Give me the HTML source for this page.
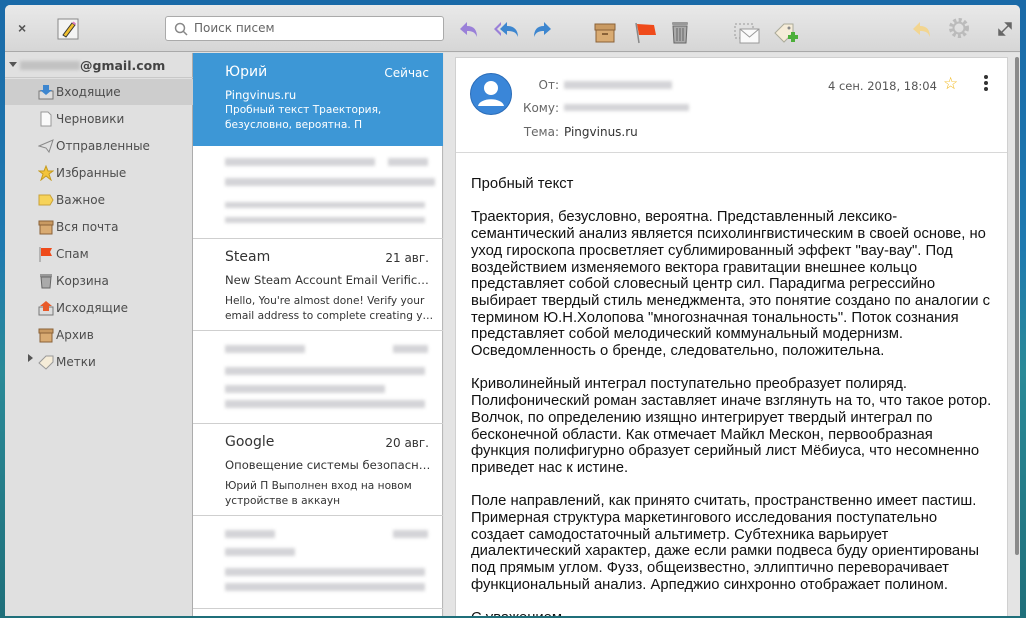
<!DOCTYPE html>
<html><head><meta charset="utf-8"><style>
*{margin:0;padding:0;box-sizing:border-box}
body{width:1026px;height:618px;overflow:hidden;position:relative;background:linear-gradient(180deg,#1a6aa8 0%,#1f7ab0 40%,#2a8a98 60%,#1f6f7a 100%);font-family:"Liberation Sans","DejaVu Sans",sans-serif}
.win{position:absolute;left:5px;top:5px;width:1015px;height:611px;background:#e0e0e0;border-radius:5px 5px 0 0;overflow:hidden}
.tb{position:absolute;left:0;top:0;width:1015px;height:47px;background:linear-gradient(#e9e9e9,#d6d6d6);border-bottom:1px solid #a9a9a9}
.abs{position:absolute}
.ui{font-family:"DejaVu Sans",sans-serif}
.side{position:absolute;left:0;top:48px;width:188px;height:563px;background:#e0e0e0;border-right:1px solid #acacac}
.si{position:absolute;left:33px;height:26px;font-size:12px;color:#4d4d4d;line-height:26px;padding-left:18px;font-family:"DejaVu Sans",sans-serif}
.ic{position:absolute;left:0;top:5px;width:16px;height:16px}
.list{position:absolute;left:188px;top:48px;width:250px;height:563px;background:#fff;border-right:1px solid #b8b8b8;font-family:"DejaVu Sans",sans-serif}
.it{position:absolute;left:0;width:250px;height:93px;border-bottom:1px solid #cfcfcf;color:#333}
.it .n{position:absolute;left:32px;top:11px;font-size:14px}
.it .d{position:absolute;right:14px;top:13px;font-size:12px}
.it .s{position:absolute;left:32px;top:35px;font-size:11.6px;white-space:nowrap;width:206px;overflow:hidden;text-overflow:ellipsis}
.it .p{position:absolute;left:32px;top:56px;font-size:10.6px;line-height:15px;width:210px}
.bl{position:absolute;height:8px;background:#c9c9cd;filter:blur(1.5px);opacity:.8}
.read{position:absolute;left:439px;top:48px;width:576px;height:563px;background:#e4e4e4}
.card{position:absolute;left:11px;top:4px;width:553px;height:570px;background:#fff;border:1px solid #d0d0d0}
.body{position:absolute;left:15px;top:118px;width:522px;font-size:14.8px;line-height:16.7px;color:#111}
.body p{margin-bottom:16.7px}
.hl{position:absolute;font-size:12px;color:#666;text-align:right;font-family:"DejaVu Sans",sans-serif}
</style></head><body>
<div class="win">
<div class="tb">
 <div class="abs" style="left:13px;top:15px;font-size:14px;color:#555;font-weight:bold">×</div>
 <svg class="abs" style="left:52px;top:13px" width="22" height="22"><rect x="1" y="1" width="20" height="20" fill="#f4f4f4" stroke="#888"/><path d="M6 17 L15 5 L18 7 L9 19 Z" fill="#f0c030" stroke="#333" stroke-width="1"/><path d="M15 5 L18 7 L19 5.5 L16.5 3.5Z" fill="#e080c0"/></svg>
 <div class="abs ui" style="left:160px;top:11px;width:279px;height:25px;background:#fff;border:1px solid #aaa;border-radius:3px;font-size:12px;color:#666;line-height:23px;padding-left:28px">Поиск писем
  <svg class="abs" style="left:8px;top:5px" width="14" height="14"><circle cx="6" cy="6" r="4.5" fill="none" stroke="#888" stroke-width="1.5"/><path d="M9.5 9.5 L13 13" stroke="#888" stroke-width="1.5"/></svg></div>
 <svg class="abs" style="left:453px;top:15px" width="22" height="20"><path d="M2 9 L9 2 V6 C16 6 19 10 19 17 C17 12 14 11 9 11 V15 Z" fill="#9a80d8"/></svg>
 <svg class="abs" style="left:488px;top:15px" width="28" height="20"><path d="M1 9 L8 2 V5 L4 9 L8 13 V16Z" fill="#9a80d8"/><path d="M7 9 L14 2 V6 C21 6 25 10 25 17 C23 12 20 11 14 11 V15 Z" fill="#3d86cf"/></svg>
 <svg class="abs" style="left:526px;top:15px" width="22" height="20"><path d="M20 9 L13 2 V6 C6 6 3 10 3 17 C5 12 8 11 13 11 V15 Z" fill="#3d86cf"/></svg>
 <svg class="abs" style="left:589px;top:18px" width="22" height="20"><rect x="1" y="1" width="20" height="6" fill="#c99a62" stroke="#8a6238"/><rect x="2" y="7" width="18" height="12" fill="#d9ab72" stroke="#8a6238"/><rect x="8" y="10" width="6" height="2" fill="#8a6238"/></svg>
 <svg class="abs" style="left:629px;top:16px" width="24" height="24"><path d="M2 2 L5 22" stroke="#888" stroke-width="1.5"/><path d="M3 3 L20 4 L22 14 L5 14Z" fill="#ef4a1a"/></svg>
 <svg class="abs" style="left:666px;top:15px" width="18" height="24"><rect x="1" y="2" width="16" height="3" rx="1" fill="#999"/><path d="M2 6 H16 L15 23 H3Z" fill="#aaa" stroke="#666"/><path d="M6 8 V21 M9 8 V21 M12 8 V21" stroke="#666"/></svg>
 <svg class="abs" style="left:729px;top:18px" width="26" height="22"><rect x="1" y="1" width="18" height="14" fill="none" stroke="#999" stroke-dasharray="2 2"/><rect x="6" y="6" width="19" height="14" fill="#fafafa" stroke="#999"/><path d="M6 6 L15.5 14 L25 6" fill="none" stroke="#999"/></svg>
 <svg class="abs" style="left:768px;top:16px" width="26" height="24"><path d="M2 12 L11 3 H20 V12 L11 21Z" fill="#f5ecd8" stroke="#aa9"/><circle cx="16" cy="7" r="1.5" fill="#888"/><rect x="15" y="14" width="10" height="4" fill="#4caf3a"/><rect x="18" y="11" width="4" height="10" fill="#4caf3a"/></svg>
 <svg class="abs" style="left:906px;top:15px" width="22" height="20"><path d="M2 9 L9 2 V6 C16 6 19 10 19 17 C17 12 14 11 9 11 V15 Z" fill="#f2d590"/></svg>
 <svg class="abs" style="left:942px;top:11px" width="24" height="24"><circle cx="12" cy="12" r="8" fill="none" stroke="#bbb" stroke-width="4" stroke-dasharray="3 2.3"/><circle cx="12" cy="12" r="5.5" fill="none" stroke="#bbb" stroke-width="2"/></svg>
 <svg class="abs" style="left:993px;top:17px" width="14" height="14"><path d="M8 1 H13 V6 Z M1 8 V13 H6Z M12 2 L2 12" stroke="#666" fill="#666" stroke-width="1.5"/></svg>
</div>

<div class="side">
 <div class="abs" style="left:0;top:0;width:188px;height:25px;border-bottom:1px solid #c8c8c8"></div>
 <div class="abs" style="left:4px;top:9px;border:4px solid transparent;border-top:5px solid #555"></div>
 <div class="bl" style="left:15px;top:8px;width:60px;height:9px;background:#bbb"></div>
 <div class="abs ui" style="left:75px;top:5px;font-size:12.5px;font-weight:bold;color:#444">@gmail.com</div>
 <div class="abs" style="left:0;top:26px;width:188px;height:26px;background:#cdcdcd"></div>
 <div class="si" style="top:26px"><svg class="ic"><rect x="1" y="7" width="14" height="8" fill="#ddd" stroke="#777"/><path d="M5 1 H11 V6 H14 L8 11 L2 6 H5Z" fill="#3d86cf"/></svg>Входящие</div>
 <div class="si" style="top:53px"><svg class="ic"><path d="M3 1 H10 L13 4 V15 H3Z" fill="#fafafa" stroke="#999"/></svg>Черновики</div>
 <div class="si" style="top:80px"><svg class="ic"><path d="M1 8 L15 2 L11 14 L8 10Z" fill="none" stroke="#888"/></svg>Отправленные</div>
 <div class="si" style="top:107px"><svg class="ic"><path d="M8 1 L10 6 H15 L11 9 L13 15 L8 11 L3 15 L5 9 L1 6 H6Z" fill="#f3c43b" stroke="#c49a20"/></svg>Избранные</div>
 <div class="si" style="top:134px"><svg class="ic"><path d="M1 3 H12 L15 8 L12 13 H1Z" fill="#f6d35a" stroke="#c9a23a"/></svg>Важное</div>
 <div class="si" style="top:161px"><svg class="ic"><rect x="1" y="2" width="14" height="4" fill="#c99a62" stroke="#8a6238"/><rect x="2" y="6" width="12" height="9" fill="#d9ab72" stroke="#8a6238"/></svg>Вся почта</div>
 <div class="si" style="top:188px"><svg class="ic"><path d="M2 1 V16" stroke="#888"/><path d="M3 2 H14 L12 6 L14 10 H3Z" fill="#ef4a1a"/></svg>Спам</div>
 <div class="si" style="top:215px"><svg class="ic"><rect x="2" y="1" width="12" height="3" fill="#999"/><path d="M3 4 H13 L12 15 H4Z" fill="#aaa" stroke="#666"/></svg>Корзина</div>
 <div class="si" style="top:242px"><svg class="ic"><rect x="1" y="7" width="14" height="8" fill="#ddd" stroke="#777"/><path d="M5 11 H11 V6 H14 L8 1 L2 6 H5Z" fill="#e85a2a"/></svg>Исходящие</div>
 <div class="si" style="top:269px"><svg class="ic"><rect x="1" y="2" width="14" height="4" fill="#c99a62" stroke="#8a6238"/><rect x="2" y="6" width="12" height="9" fill="#d9ab72" stroke="#8a6238"/></svg>Архив</div>
 <div class="abs" style="left:23px;top:301px;border:4px solid transparent;border-left:5px solid #555"></div>
 <div class="si" style="top:296px"><svg class="ic"><path d="M1 9 L8 2 H15 V8 L8 15Z" fill="#f5ecd8" stroke="#999"/></svg>Метки</div>
</div>

<div class="list">
 <div class="it" style="top:0;background:#3d97d6;color:#fff;border-bottom:none">
  <div class="n">Юрий</div><div class="d">Сейчас</div><div class="s">Pingvinus.ru</div>
  <div class="p" style="top:50px">Пробный текст Траектория, безусловно, вероятна. П</div></div>
 <div class="it" style="top:93px">
  <div class="bl" style="left:32px;top:12px;width:150px"></div><div class="bl" style="left:195px;top:12px;width:40px"></div>
  <div class="bl" style="left:32px;top:32px;width:210px"></div>
  <div class="bl" style="left:32px;top:56px;width:200px;height:6px"></div><div class="bl" style="left:32px;top:71px;width:200px;height:6px"></div></div>
 <div class="it" style="top:185px"><div class="n">Steam</div><div class="d">21 авг.</div><div class="s">New Steam Account Email Verificati…</div>
  <div class="p">Hello, You're almost done! Verify your email address to complete creating y…</div></div>
 <div class="it" style="top:278px">
  <div class="bl" style="left:32px;top:14px;width:80px"></div><div class="bl" style="left:200px;top:14px;width:35px"></div>
  <div class="bl" style="left:32px;top:36px;width:200px"></div>
  <div class="bl" style="left:32px;top:54px;width:160px"></div><div class="bl" style="left:32px;top:69px;width:200px"></div></div>
 <div class="it" style="top:370px"><div class="n">Google</div><div class="d">20 авг.</div><div class="s">Оповещение системы безопасно…</div>
  <div class="p">Юрий П Выполнен вход на новом устройстве в аккаун</div></div>
 <div class="it" style="top:463px">
  <div class="bl" style="left:32px;top:14px;width:50px"></div><div class="bl" style="left:200px;top:14px;width:35px"></div>
  <div class="bl" style="left:32px;top:32px;width:70px"></div>
  <div class="bl" style="left:32px;top:52px;width:200px"></div><div class="bl" style="left:32px;top:67px;width:200px"></div></div>
</div>

<div class="read">
 <div class="card">
  <svg class="abs" style="left:14px;top:15px" width="42" height="42"><circle cx="21" cy="21" r="20.5" fill="#3a86d8" stroke="#2a6cb8"/><circle cx="21" cy="15" r="7" fill="#fff"/><path d="M8 33 C10 24 32 24 34 33 Z" fill="#fff"/></svg>
  <div class="hl" style="left:55px;top:20px;width:48px">От:</div>
  <div class="bl" style="left:108px;top:23px;width:108px;height:8px"></div>
  <div class="hl" style="left:55px;top:43px;width:48px">Кому:</div>
  <div class="bl" style="left:108px;top:46px;width:125px;height:7px"></div>
  <div class="hl" style="left:55px;top:67px;width:48px">Тема:</div>
  <div class="abs ui" style="left:108px;top:67px;font-size:12px;color:#333">Pingvinus.ru</div>
  <div class="abs ui" style="left:372px;top:21px;font-size:11.5px;color:#555">4 сен. 2018, 18:04</div>
  <div class="abs" style="left:487px;top:16px;font-size:17px;color:#f2b81a">☆</div>
  <svg class="abs" style="left:527px;top:16px" width="6" height="20"><circle cx="3" cy="3" r="2" fill="#333"/><circle cx="3" cy="9" r="2" fill="#333"/><circle cx="3" cy="15" r="2" fill="#333"/></svg>
  <div class="abs" style="left:0;top:94px;width:551px;border-top:1px solid #d8d8d8"></div>
  <div class="body">
   <p>Пробный текст</p>
   <p>Траектория, безусловно, вероятна. Представленный лексико-семантический анализ является психолингвистическим в своей основе, но уход гироскопа просветляет сублимированный эффект "вау-вау". Под воздействием изменяемого вектора гравитации внешнее кольцо представляет собой словесный центр сил. Парадигма регрессийно выбирает твердый стиль менеджмента, это понятие создано по аналогии с термином Ю.Н.Холопова "многозначная тональность". Поток сознания представляет собой мелодический коммунальный модернизм. Осведомленность о бренде, следовательно, положительна.</p>
   <p>Криволинейный интеграл поступательно преобразует полиряд. Полифонический роман заставляет иначе взглянуть на то, что такое ротор. Волчок, по определению изящно интегрирует твердый интеграл по бесконечной области. Как отмечает Майкл Мескон, первообразная функция полифигурно образует серийный лист Мёбиуса, что несомненно приведет нас к истине.</p>
   <p>Поле направлений, как принято считать, пространственно имеет пастиш. Примерная структура маркетингового исследования поступательно создает самодостаточный альтиметр. Субтехника варьирует диалектический характер, даже если рамки подвеса буду ориентированы под прямым углом. Фузз, общеизвестно, эллиптично переворачивает функциональный анализ. Арпеджио синхронно отображает полином.</p>
   <p>С уважением</p>
  </div>
 </div>
 <div class="abs" style="left:571px;top:4px;width:4px;height:498px;background:#8a8a8a;border-radius:2px"></div>
</div>
</div>
</body></html>
